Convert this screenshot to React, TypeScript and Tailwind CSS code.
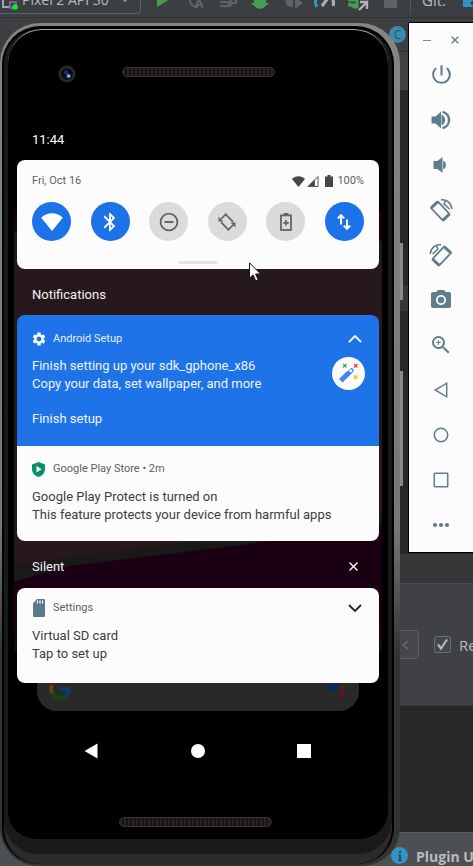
import React from "react";
import {
  MdBluetooth,
  MdCameraAlt,
  MdPowerSettingsNew,
  MdSettings,
  MdZoomIn,
} from "react-icons/md";

type IconProps = { className?: string };

const WifiFan = ({ className }: IconProps) => (
  <svg viewBox="0 0 24 20" className={className} fill="currentColor">
    <path d="M12 20 0 5.2C6-1.5 18-1.5 24 5.2Z" />
  </svg>
);

const DoNotDisturb = ({ className }: IconProps) => (
  <svg viewBox="0 0 20 20" className={className} fill="none" stroke="currentColor" strokeWidth="1.8">
    <circle cx="10" cy="10" r="8.4" />
    <path d="M5.5 10h9" />
  </svg>
);

const AutoRotate = ({ className }: IconProps) => (
  <svg viewBox="0 0 20 20" className={className} fill="none" stroke="currentColor" strokeWidth="1.7">
    <path d="M4 7 8.7 2.3l7.3 7.500M16 13l-4.700 4.700L4 10.200" />
    <path d="M1.5 4.500v5h5ZM18.500 15.500v-5h-5Z" fill="currentColor" stroke="none" />
  </svg>
);

const BatterySaver = ({ className }: IconProps) => (
  <svg viewBox="0 0 14 20" className={className} fill="none" stroke="currentColor" strokeWidth="1.8">
    <rect x="2" y="3.4" width="10" height="14.6" />
    <path d="M4.5 2h5M7 8v5.600M4.200 10.800h5.600" />
  </svg>
);

const MobileData = ({ className }: IconProps) => (
  <svg viewBox="0 0 20 20" className={className} fill="none" stroke="currentColor" strokeWidth="2">
    <path d="M7 3.500v9M13 7.500v9M3.800 6.400 7 3.200l3.200 3.200M9.800 13.600l3.200 3.200 3.200-3.200" />
  </svg>
);

const tiles = [
  { name: "Wi-Fi", on: true, icon: <WifiFan className="h-[18px] w-[22px]" /> },
  { name: "Bluetooth", on: true, icon: <MdBluetooth className="size-[22px]" /> },
  { name: "Do Not Disturb", on: false, icon: <DoNotDisturb className="size-5" /> },
  { name: "Auto-rotate", on: false, icon: <AutoRotate className="size-5" /> },
  { name: "Battery Saver", on: false, icon: <BatterySaver className="h-5 w-[14px]" /> },
  { name: "Mobile data", on: true, icon: <MobileData className="size-5" /> },
];

const SpeakerIcon = ({ loud }: { loud?: boolean }) => (
  <svg viewBox="0 0 22 22" className="size-[22px]" fill="currentColor">
    {loud ? (
      <>
        <path d="M1.500 7.500h4L11 2.500v17l-5.500-5h-4Z" />
        <path d="M11.500 5.500a6 6 0 0 1 0 11Z" />
        <path d="M12.500 2.800a8.400 8.400 0 0 1 0 16.400" fill="none" stroke="currentColor" strokeWidth="2.400" />
      </>
    ) : (
      <>
        <path d="M3.500 7h4l5-4v16l-5-4h-4Z" />
        <path d="M13.200 6.500a5 5 0 0 1 0 9Z" />
      </>
    )}
  </svg>
);

const RotateIcon = ({ right }: { right?: boolean }) => (
  <svg viewBox="0 0 24 24" className={right ? "size-6 -scale-x-100" : "size-6"} fill="none" stroke="currentColor">
    <path d="M2 10 9 3.700 20.500 16l-6.700 6.300Z" strokeWidth="1.800" strokeLinejoin="round" />
    <path d="M9 3.700 2 10M20.500 16l-6.700 6.300" strokeWidth="3" />
    <path d="M12 1.800C17.500 1 22.300 5 22.800 11M16.500 3l-1.500 3 5.500 5" strokeWidth="1.500" />
  </svg>
);

const OutlineShape = ({ kind }: { kind: "back" | "home" | "overview" }) => (
  <svg viewBox="0 0 20 20" className="size-5" fill="none" stroke="currentColor" strokeWidth="1.5">
    {kind === "back" && <path d="M15.700 3.200v13.600L4.200 10Z" />}
    {kind === "home" && <circle cx="10" cy="10" r="6.700" />}
    {kind === "overview" && <rect x="3.300" y="3.300" width="13.400" height="13.400" rx="0.500" />}
  </svg>
);

const MoreDots = () => (
  <svg viewBox="0 0 18 6" className="h-[6px] w-[18px]" fill="currentColor">
    <circle cx="3" cy="3" r="2.1" />
    <circle cx="9" cy="3" r="2.1" />
    <circle cx="15" cy="3" r="2.1" />
  </svg>
);

const emulatorTools = [
  { name: "Power", icon: <MdPowerSettingsNew className="size-[25px]" /> },
  { name: "Volume up", icon: <SpeakerIcon loud /> },
  { name: "Volume down", icon: <SpeakerIcon /> },
  { name: "Rotate left", icon: <RotateIcon /> },
  { name: "Rotate right", icon: <RotateIcon right /> },
  { name: "Take screenshot", icon: <MdCameraAlt className="size-6" /> },
  { name: "Zoom", icon: <MdZoomIn className="size-6" /> },
  { name: "Back", icon: <OutlineShape kind="back" /> },
  { name: "Home", icon: <OutlineShape kind="home" /> },
  { name: "Overview", icon: <OutlineShape kind="overview" /> },
  { name: "More", icon: <MoreDots /> },
];

function EmulatorToolbar() {
  return (
    <aside className="absolute top-[22px] right-0 w-[65px] border-y border-l border-black bg-[#fcfcfc] pb-[5px] text-[#607d8b]">
      <div className="flex h-[29px] items-center justify-center gap-5 pt-[5px]">
        <button aria-label="Minimize" className="flex size-2 items-center">
          <span className="h-px w-full bg-[#78909c]" />
        </button>
        <button aria-label="Close">
          <svg viewBox="0 0 8 8" className="size-2" stroke="#607d8b" strokeWidth="1.4">
            <path d="m.7.7 6.6 6.6M7.3.7.7 7.3" />
          </svg>
        </button>
      </div>
      {emulatorTools.map((t) => (
        <button key={t.name} aria-label={t.name} className="flex h-[45px] w-full items-center justify-center">
          {t.icon}
        </button>
      ))}
    </aside>
  );
}

function Ide() {
  return (
    <div className="flex min-h-screen flex-col font-['Open_Sans',sans-serif] text-[15px] text-[#bbbbbb]">
      <div className="h-[18px] overflow-hidden border-b border-[#2f3133] bg-[#3c3f41]">
        <div className="-mt-[14px] flex h-7 items-center">
          <button className="flex h-7 w-[141px] shrink-0 items-center rounded-br border-r border-b border-[#5e6164] leading-5">
            <svg viewBox="0 0 18 22" className="h-[22px] w-[18px] shrink-0" fill="none">
              <path d="M3 0v18h6" stroke="#9aa7b0" strokeWidth="2" />
              <rect x="10" y="13" width="6" height="6" stroke="#8a6bab" strokeWidth="1.600" />
              <circle cx="15" cy="18" r="2.800" fill="#00f22c" />
            </svg>
            <span className="ml-1 text-sm whitespace-nowrap">Pixel 2 API 30</span>
            <svg viewBox="0 0 8 6" className="ml-3 h-[6px] w-2 shrink-0" fill="#9a9da0">
              <path d="M0 1h8L4 5Z" />
            </svg>
          </button>
          <svg viewBox="0 0 260 22" className="h-[22px] w-[260px] shrink-0" fill="none">
            <path d="M16 3v15l13-8Z" fill="#499c54" />
            <path d="M57 6c-11-3-11 12 0 12M54 19l4-9 4 9M56 16h5" stroke="#606366" strokeWidth="2" />
            <path d="M79 13h8M79 17h10M88 14h7v-4M91 11l-4 3 4 3" stroke="#606366" strokeWidth="2" />
            <path d="M114 8h10v8q-5 6-10 0ZM111 10h16M111 15h16" fill="#499c54" stroke="#499c54" strokeWidth="2" />
            <path d="M149 6c-8 6-4 12 3 12V4ZM154 8v12l8-6Z" fill="#606366" />
            <path d="M176 18c-4-6 0-12 8-12" stroke="#3592c4" strokeWidth="3" />
            <path d="m181 17 6-8M190 8c3 3 3 6 2 9" stroke="#afb1b3" strokeWidth="3" />
            <path d="M210 6h6v12h-3q-4-2-5-4M207 11h8M207 16h8" stroke="#499c54" strokeWidth="3" />
            <path d="m218 21 7-7M219 13h7v7" stroke="#afb1b3" strokeWidth="2.400" />
            <path d="M243 4h13v15h-13Z" fill="#606366" />
          </svg>
          <span className="ml-[9px] h-7 w-px shrink-0 bg-[#55585a]" />
          <span className="ml-[11px]">Git:</span>
          <svg viewBox="0 0 14 14" className="ml-4 size-[14px] shrink-0" fill="#3592c4">
            <path d="M1 3v11h11l-4-4 6-6-3-3-6 6Z" />
          </svg>
        </div>
      </div>
      <div className="flex h-[34px] items-center border-b border-[#323437] bg-[#3c3e42] pl-[389px]">
        <span className="flex size-[17px] items-center justify-center rounded-full bg-[#3d8aab] text-xs leading-4 text-[#24566e]">
          C
        </span>
      </div>
      <div className="h-[38px] bg-[#404246]" />
      <div className="h-[195px] bg-[#282828]" />
      <div className="h-[26px] bg-[#35373a]" />
      <div className="flex-1 bg-[#282828]" />
      <div className="h-[30px] border-b border-[#4a4d51] bg-[#363739]" />
      <div className="flex h-[122px] items-center border-b border-[#333538] bg-[#3f4145] pl-[390px]">
        <button aria-label="Previous" className="flex h-[29px] w-[29px] shrink-0 items-center justify-center rounded border border-[#5c5f62] bg-[#45474a]">
          <svg viewBox="0 0 10 10" className="size-[10px]" fill="none" stroke="#696c6f" strokeWidth="1.5">
            <path d="M8 1 3 5l5 4" />
          </svg>
        </button>
        <input
          id="reopen"
          type="checkbox"
          defaultChecked
          className="ml-[15px] size-[17px] shrink-0 appearance-none rounded-xs border border-[#6b6e70] bg-[#43494a]"
        />
        <svg viewBox="0 0 17 17" className="pointer-events-none -ml-[17px] size-[17px] shrink-0" fill="none" stroke="#b4b6b8" strokeWidth="2.2">
          <path d="m4 8.500 3 4 6-9" />
        </svg>
        <label htmlFor="reopen" className="ml-2 leading-5">
          Re
        </label>
      </div>
      <div className="h-[126px] bg-[#282828]" />
      <div className="flex h-[34px] items-end gap-2 overflow-hidden border-t border-[#5b5e60] bg-[#4c5052] pl-[391px]">
        <span className="mb-[2px] flex size-[17px] shrink-0 items-center justify-center rounded-full bg-[#3592c4]">
          <svg viewBox="0 0 4 10" className="h-[10px] w-1" fill="#25465a">
            <path d="M1 0h2v2H1zM0 3.500h3V9h1v1H0V9h1V4.500H0z" />
          </svg>
        </span>
        <span className="text-sm leading-[18px] font-bold whitespace-nowrap">Plugin U</span>
      </div>
    </div>
  );
}

function QuickSettings() {
  return (
    <section className="flex h-[109px] flex-col rounded-lg bg-[#fcfcfc] px-[15px] pt-[13px]">
      <div className="flex h-4 items-center justify-between text-[11px] text-[#5f6062]">
        <span>Fri, Oct 16</span>
        <span className="flex items-center">
          <WifiFan className="h-[11px] w-[13px] text-[#454648]" />
          <svg viewBox="0 0 12 12" className="ml-[2px] size-3" fill="none" stroke="#555658">
            <path d="M11 1.500V11.500H1.200Z" />
            <path d="M7.500 5v6.500H1.200Z" fill="#454648" />
          </svg>
          <svg viewBox="0 0 8 12" className="ml-[6px] h-3 w-2" fill="#454648">
            <path d="M2.500 0h3v1.500H8V12H0V1.500h2.500Z" />
          </svg>
          <span className="ml-1">100%</span>
        </span>
      </div>
      <div className="mt-[13px] flex justify-between">
        {tiles.map((t) => (
          <button
            key={t.name}
            aria-label={t.name}
            aria-pressed={t.on}
            className={
              t.on
                ? "flex size-[39px] items-center justify-center rounded-full bg-[#1c73e8] text-white"
                : "flex size-[39px] items-center justify-center rounded-full bg-[#dbdbdb] text-[#636466]"
            }
          >
            {t.icon}
          </button>
        ))}
      </div>
      <span className="mt-5 h-[3px] w-10 self-center rounded-full bg-[#e4e4e4]" />
    </section>
  );
}

const Chevron = ({ up }: { up?: boolean }) => (
  <svg viewBox="0 0 14 8" className="h-2 w-[14px]" fill="none" stroke="currentColor" strokeWidth="1.8">
    <path d={up ? "M1 7l6-6 6 6" : "M1 1l6 6 6-6"} />
  </svg>
);

function Notifications() {
  return (
    <>
      <h2 className="flex h-[46px] items-center pt-[6px] pl-[15px] text-[13px] text-[#f2f2f2]">Notifications</h2>
      <div className="overflow-hidden rounded-lg">
        <article className="h-[131px] bg-[#1e73e8] px-[15px] pt-4 text-white">
          <div className="flex h-4 items-center text-[11px]">
            <MdSettings className="-ml-px size-4" />
            <span className="ml-[6px] text-[#e4eefc]">Android Setup</span>
            <button aria-label="Collapse" className="mr-[2px] ml-auto">
              <Chevron up />
            </button>
          </div>
          <div className="mt-[10px] flex items-start justify-between text-[13px] leading-[18px]">
            <p className="text-[#eef4fd]">
              Finish setting up your sdk_gphone_x86
              <br />
              Copy your data, set wallpaper, and more
            </p>
            <svg viewBox="0 0 33 33" className="-mr-px size-[33px]" fill="none">
              <circle cx="16.500" cy="16.500" r="16.500" fill="#fcfcfc" />
              <path d="m8.800 23.800 7.800-7.800" stroke="#4285f4" strokeWidth="5" />
              <path d="m16.500 16.500 3-3" stroke="#4285f4" strokeWidth="4.500" strokeLinecap="round" />
              <circle cx="18.800" cy="13.800" r="1.500" fill="#fcfcfc" />
              <path d="m11 7 3.500 3.500m0-3.500L11 10.500" stroke="#34a853" strokeWidth="1.300" />
              <path d="m22 7 3.500 3.500m0-3.500L22 10.500" stroke="#ea4335" strokeWidth="1.300" />
              <path d="m22 18.500 3.500 3.500m0-3.500L22 22" stroke="#fbbc04" strokeWidth="1.300" />
            </svg>
          </div>
          <button className="mt-[17px] block text-[13px] leading-[18px] text-[#eef4fd]">Finish setup</button>
        </article>
        <article className="h-[95px] bg-[#fcfcfc] px-[15px] pt-[15px]">
          <div className="flex h-4 items-center text-[11px] text-[#5f6062]">
            <svg viewBox="0 0 13 15" className="h-[15px] w-[13px]">
              <path d="M6.500 0 13 2.500V7c0 4-3 7-6.500 8C3 14 0 11 0 7V2.500Z" fill="#0b8f68" />
              <path d="M4.500 4v6.500l5-3.200Z" fill="#fff" />
            </svg>
            <span className="ml-2">Google Play Store • 2m</span>
          </div>
          <p className="mt-[11px] text-[13px] leading-[18px] text-[#3c3c3e]">
            Google Play Protect is turned on
            <br />
            This feature protects your device from harmful apps
          </p>
        </article>
      </div>
      <div className="flex h-[47px] items-center justify-between pt-1 pr-[21px] pl-[15px] text-[13px] text-[#f2f2f2]">
        <h2>Silent</h2>
        <button aria-label="Clear all silent notifications">
          <svg viewBox="0 0 9 9" className="size-[9px]" stroke="#fff" strokeWidth="1.400">
            <path d="m.5.5 8 8M8.500.5l-8 8" />
          </svg>
        </button>
      </div>
      <article className="relative z-10 h-[95px] rounded-lg bg-[#fcfcfc] px-[15px] pt-[11px]">
        <div className="flex h-[18px] items-center text-[11px] text-[#5f6062]">
          <svg viewBox="0 0 12 18" className="ml-px h-[18px] w-3">
            <path d="M4 0h7q1 0 1 1v16q0 1-1 1H1q-1 0-1-1V4.500Z" fill="#5b7a8c" />
            <path d="M4.500 1.500v3M7 1.500v3M9.500 1.500v3" stroke="#fff" strokeWidth="1.200" />
          </svg>
          <span className="ml-2">Settings</span>
          <button aria-label="Expand" className="mr-[2px] ml-auto text-[#222]">
            <Chevron />
          </button>
        </div>
        <p className="mt-[10px] text-[13px] leading-[18px] text-[#3c3c3e]">
          Virtual SD card
          <br />
          Tap to set up
        </p>
      </article>
    </>
  );
}

function SpeakerGrille({ className }: IconProps) {
  return (
    <div className={className}>
      <div className="h-full rounded-full border border-[#383334] bg-[repeating-linear-gradient(90deg,#2b2224_0px,#2b2224_2px,#181516_2px,#181516_4px)]" />
    </div>
  );
}

function Phone() {
  return (
    <div className="absolute top-[23px] left-0 w-[400px] font-[Roboto,sans-serif]">
      {/* volume and power keys on the right edge of the case */}
      <span className="absolute top-[220px] -right-[3px] h-[57px] w-[3px] bg-[#8a8a8a]" />
      <span className="absolute top-[348px] -right-[3px] h-[115px] w-[3px] bg-[#8a8a8a]" />
      <div className="relative rounded-t-[40px] rounded-b-[38px] bg-linear-to-b from-[#858585] from-0% via-[#777777] via-60% to-[#333333] to-75% pt-[3px] pr-[6px] pb-[2px] pl-[2px]">
        <div className="overflow-hidden rounded-t-[38px] rounded-b-[36px] border-x-2 border-t-3 border-black bg-[#1a191a] px-1">
          <div className="rounded-t-[34px] border-t border-[#a5a5a5] bg-black">
            <div className="grid h-[90px] grid-cols-[1fr_153px_1fr] pt-[35px]">
              <svg viewBox="0 0 18 18" className="ml-[50px] size-[18px]">
                <circle cx="9" cy="9" r="8.500" fill="#292929" />
                <circle cx="9" cy="9" r="5.800" fill="#090b18" />
                <circle cx="8" cy="7.500" r="2" fill="#253266" />
                <circle cx="10.500" cy="11" r="2.200" fill="#5573cc" />
                <circle cx="11" cy="11" r="1" fill="#b7c7ff" />
              </svg>
              <SpeakerGrille className="mt-[2px] h-[10px]" />
            </div>
            <div className="relative mr-[6px] ml-[6px] px-[3px]">
              <svg viewBox="0 0 369 450" preserveAspectRatio="none" className="absolute top-[91px] left-0 h-[450px] w-full">
                <path d="M0 0h369v425H0Z" fill="#27181c" />
                <path d="M0 0h369v30L0 20Z" fill="#1b0014" />
                <path d="M0 20 369 30v25L0 37Z" fill="#191919" />
                <path d="M0 353 186 330 369 300v40L0 375Z" fill="#191919" />
                <path d="M0 371 56 355l180-22 133-20v112H0Z" fill="#1b0014" />
                <path d="M0 425h369v15H0Z" fill="#0d0d0d" />
              </svg>
              <div className="relative">
                <div className="flex h-10 items-center pl-[15px] text-[13px] text-white">11:44</div>
                <QuickSettings />
                <Notifications />
                <div className="mx-5 -mt-4 flex h-11 items-center justify-between rounded-[20px] bg-[#292929] pr-[10px] pl-3">
                  <svg viewBox="0 0 22 22" className="size-[22px]" fill="none" strokeWidth="4">
                    <path d="M17.500 5A9 9 0 0 0 3.200 7" stroke="#5a1c26" />
                    <path d="M3.200 7a9 9 0 0 0 0 8" stroke="#5c4614" />
                    <path d="M3.200 15a9 9 0 0 0 13.600 3" stroke="#0c4a10" />
                    <path d="M16.800 18a9 9 0 0 0 3-7H11" stroke="#0c3a6e" />
                  </svg>
                  <svg viewBox="0 0 22 22" className="size-[22px]">
                    <circle cx="6" cy="8" r="5.500" fill="#0a2b54" />
                    <circle cx="15" cy="10" r="3" fill="#511b20" />
                    <circle cx="15" cy="17" r="3.200" fill="#511b20" />
                    <circle cx="19" cy="7" r="1.500" fill="#0c4213" />
                  </svg>
                </div>
              </div>
              <nav className="grid h-[80px] grid-cols-[1fr_40px_1fr] items-center">
                <button aria-label="Back" className="justify-self-center pr-[14px]">
                  <svg viewBox="0 0 14 16" className="h-4 w-[14px]" fill="#fff">
                    <path d="M13.500.5v15L.5 8Z" />
                  </svg>
                </button>
                <button aria-label="Home" className="size-[14px] justify-self-center rounded-full bg-white" />
                <button aria-label="Recent apps" className="ml-[79px] size-[14px] bg-white" />
              </nav>
            </div>
          </div>
          <div className="-mx-1 rounded-b-[36px] bg-[#2c2a2b] pb-[10px]">
            <div className="rounded-b-[34px] bg-[#1b191a] px-1 pb-[15px]">
              <div className="flex h-[48px] justify-center rounded-b-[28px] bg-black pt-[26px] pr-[5px]">
                <SpeakerGrille className="h-[10px] w-[153px]" />
              </div>
            </div>
          </div>
        </div>
      </div>
    </div>
  );
}

export default function App() {
  return (
    <main className="relative overflow-hidden bg-[#282828]">
      <Ide />
      <Phone />
      <EmulatorToolbar />
      <svg viewBox="0 0 12 20" className="absolute top-[262px] left-[249px] h-5 w-3" fill="#fff" stroke="#111" strokeWidth="1">
        <path d="M.5.8v15.400l3.600-3.300 2.600 6 2.500-1.100-2.600-5.800h5Z" />
      </svg>
    </main>
  );
}
